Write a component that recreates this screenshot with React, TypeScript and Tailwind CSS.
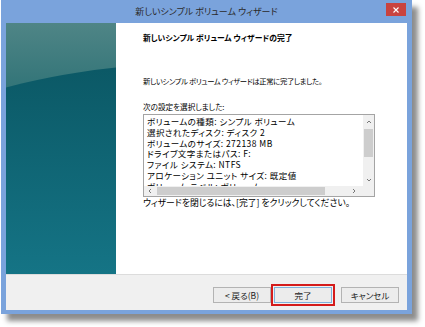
import React from 'react';

const jp = "[font-family:'Noto_Sans_CJK_JP','Noto_Sans',sans-serif] [font-feature-settings:'palt']";

const settings = [
  'ボリュームの種類: シンプル ボリューム',
  '選択されたディスク: ディスク 2',
  'ボリュームのサイズ: 272138 MB',
  'ドライブ文字またはパス: F:',
  'ファイル システム: NTFS',
  'アロケーション ユニット サイズ: 既定値',
  'ボリューム ラベル: ボリューム',
];

function SidePanel() {
  return (
    <svg width="110" height="251" viewBox="0 0 110 251" className="block">
      <defs>
        <linearGradient id="sideBg" x1="0" y1="0" x2="0" y2="1">
          <stop offset="0" stopColor="#4f8586" />
          <stop offset="0.3" stopColor="#2e7276" />
          <stop offset="1" stopColor="#218896" />
        </linearGradient>
        <linearGradient id="sideDark" x1="0" y1="0" x2="0" y2="1">
          <stop offset="0" stopColor="#0b5865" />
          <stop offset="1" stopColor="#16788a" />
        </linearGradient>
      </defs>
      <rect width="110" height="251" fill="url(#sideBg)" />
      <ellipse cx="200" cy="160" rx="330" ry="120" fill="url(#sideDark)" />
    </svg>
  );
}

function Chevron({ dir }: { dir: 'up' | 'down' | 'left' | 'right' }) {
  const d = {
    up: 'M1 4L3 2L5 4',
    down: 'M1 2L3 4L5 2',
    left: 'M4 1L2 3L4 5',
    right: 'M2 1L4 3L2 5',
  }[dir];
  return (
    <svg width="6" height="6" viewBox="0 0 6 6" className="block">
      <path d={d} fill="none" stroke="#6a6a6a" strokeWidth="0.9" />
    </svg>
  );
}

function Button({ children, primary }: { children: React.ReactNode; primary?: boolean }) {
  return (
    <button
      type="button"
      className={
        'h-[16px] w-[58px] flex items-center justify-center text-[8.5px] text-[#222] bg-[#ececec] border ' +
        (primary ? 'border-[#7fb2dc]' : 'border-[#b3b3b3]')
      }
    >
      {children}
    </button>
  );
}

export default function App() {
  return (
    <div className={'w-[425px] h-[327px] bg-white ' + jp}>
      <div className="ml-[1px] w-[411px] bg-[#7aa3dc] px-[5px] pb-[4px] shadow-[6px_7px_5px_rgba(0,0,0,0.45)]">
        <div className="relative h-[23px] flex items-center justify-center">
          <span className="text-[9px] text-[#2a2a2a] pt-[1px]">新しいシンプル ボリューム ウィザード</span>
          <div className="absolute right-[1px] top-[3px] w-[20px] h-[13px] bg-[#c9433f] flex items-center justify-center">
            <svg width="6" height="6" viewBox="0 0 6 6">
              <path d="M0.5 0.5L5.5 5.5M5.5 0.5L0.5 5.5" stroke="#fff" strokeWidth="1.1" />
            </svg>
          </div>
        </div>
        <div className="flex h-[251px]">
          <SidePanel />
          <div className="flex-1 bg-white pl-[27px] pr-[25px] text-black">
            <div className="mt-[5px] text-[7.8px] font-bold leading-[20px]">新しいシンプル ボリューム ウィザードの完了</div>
            <div className="mt-[27px] text-[7.4px] tracking-[-0.4px] leading-[12px]">新しいシンプル ボリューム ウィザードは正常に完了しました。</div>
            <div className="mt-[14px] text-[7.6px] leading-[12px]">次の設定を選択しました:</div>
            <div className="mt-[1px] w-[232px] h-[83px] border border-[#a4a4a4] flex flex-col">
              <div className="flex flex-1 min-h-0">
                <div className="flex-1 overflow-hidden pl-[3px] pt-[1px]">
                  {settings.map((s) => (
                    <div key={s} className="text-[8.5px] tracking-[0.45px] leading-[10.8px] whitespace-nowrap">{s}</div>
                  ))}
                </div>
                <div className="w-[11px] bg-[#f0f0f0] flex flex-col items-center">
                  <div className="h-[14px] flex items-center justify-center"><Chevron dir="up" /></div>
                  <div className="w-[9px] h-[28px] bg-[#cdcdcd]" />
                  <div className="flex-1" />
                  <div className="h-[12px] flex items-center justify-center"><Chevron dir="down" /></div>
                </div>
              </div>
              <div className="h-[10px] flex items-center bg-[#f0f0f0]">
                <div className="w-[11px] flex justify-center"><Chevron dir="left" /></div>
                <div className="ml-[2px] w-[168px] h-[8px] bg-[#cdcdcd]" />
                <div className="flex-1" />
                <div className="w-[18px] flex justify-center"><Chevron dir="right" /></div>
                <div className="w-[11px]" />
              </div>
            </div>
            <div className="mt-[0px] text-[8.8px] leading-[12px]">ウィザードを閉じるには、[完了] をクリックしてください。</div>
          </div>
        </div>
        <div className="h-[36px] bg-[#f0f0f0] border-t border-[#dcdcdc] flex items-start justify-end pt-[11px] pr-[8px]">
          <div className="mt-[1px]">
            <Button>&lt; 戻る(B)</Button>
          </div>
          <div className="border-2 border-[#d41c1c] p-[1px] mt-[-2px]">
            <Button primary>完了</Button>
          </div>
          <div className="mt-[1px] ml-[6px]">
            <Button>キャンセル</Button>
          </div>
        </div>
      </div>
    </div>
  );
}
